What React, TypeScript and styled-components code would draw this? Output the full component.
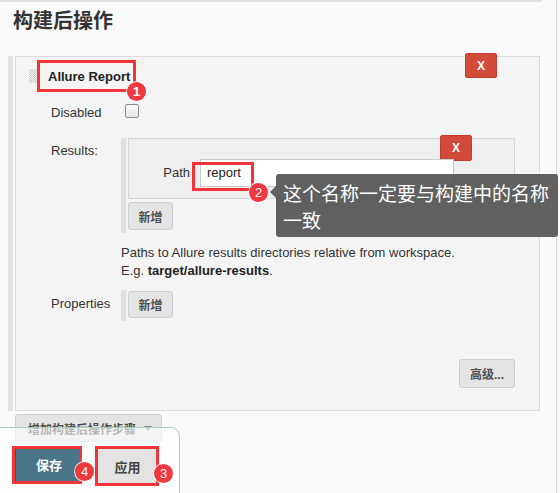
import React from "react";
import styled, { createGlobalStyle } from "styled-components";

const GlobalStyle = createGlobalStyle`
  html, body {
    margin: 0;
    padding: 0;
    background: #fafafa;
    overflow: hidden;
  }
  body {
    font-family: "Liberation Sans", Arial, "Noto Sans CJK SC", sans-serif;
    font-size: 13px;
    color: #333;
  }
`;

const Page = styled.div`
  position: relative;
  width: 557px;
  height: 493px;
  border-right: 1px solid #dcdcdc;
  box-sizing: border-box;
`;

const Main = styled.div`
  width: 542px;
  border-top: 2px solid #e0e0e0;
`;

const Title = styled.h1`
  margin: 0;
  padding: 3px 13px 5px;
  line-height: 30px;
  font-size: 20px;
  font-weight: bold;
  font-family: "Noto Sans CJK SC", sans-serif;
  color: #333;
`;

const Section = styled.div`
  margin: 16px 0 0 8px;
  padding-left: 2px;
  border-left: 5px solid #e3e3e3;
  width: 525px;
`;

const Panel = styled.div`
  position: relative;
  box-sizing: border-box;
  width: 525px;
  padding: 3px 24px 22px 13px;
  background: #f4f4f4;
  border: 1px solid #dcdcdc;
`;

const DeleteButton = styled.button<{ $h: number }>`
  position: absolute;
  top: -4px;
  right: 42px;
  width: 32px;
  height: ${(p) => p.$h}px;
  padding: 0;
  border: 1px solid #c23e2e;
  border-radius: 2px;
  background: #d24a3a;
  color: #fff;
  font-family: "Liberation Sans", Arial, sans-serif;
  font-size: 12px;
  font-weight: bold;
`;

const PanelHeader = styled.div`
  display: flex;
  align-items: center;
  height: 32px;
`;

const DragHandle = styled.span`
  width: 8px;
  height: 14px;
  background: repeating-conic-gradient(#c9c9c9 0 25%, transparent 0 50%) 0 0 / 2px 2px;
`;

const Heading = styled.div`
  position: relative;
  display: flex;
  align-items: center;
  box-sizing: border-box;
  height: 32px;
  padding: 0 6px 0 11px;
  font-weight: bold;
  color: #222;
`;

const Mark = styled.span<{ $l: number; $t: number; $w: number; $h: number }>`
  position: absolute;
  left: ${(p) => p.$l}px;
  top: ${(p) => p.$t}px;
  width: ${(p) => p.$w}px;
  height: ${(p) => p.$h}px;
  box-sizing: border-box;
  border: 3px solid #f1333a;
  pointer-events: none;
`;

const Badge = styled.span<{ $l: number; $t: number }>`
  position: absolute;
  left: ${(p) => p.$l}px;
  top: ${(p) => p.$t}px;
  width: 19px;
  height: 19px;
  border-radius: 50%;
  background: #ee393f;
  box-shadow: 0 0 0 1px rgba(255, 255, 255, 0.8);
  color: #fff;
  font-family: "Liberation Sans", Arial, sans-serif;
  font-size: 13px;
  line-height: 19px;
  text-align: center;
  z-index: 3;
`;

const FormRow = styled.div<{ $top: number }>`
  display: grid;
  grid-template-columns: 70px 1fr;
  margin: ${(p) => p.$top}px 0 0 22px;
`;

const Label = styled.div<{ $pad?: number }>`
  padding-top: ${(p) => p.$pad ?? 0}px;
  line-height: 18px;
  color: #333;
`;

const CheckCell = styled.div`
  display: flex;
  align-items: center;
  height: 22px;
  margin-top: -2px;
`;

const Checkbox = styled.span`
  width: 12px;
  height: 12px;
  margin-left: 4px;
  border: 1px solid #8d8d8d;
  border-radius: 2px;
  background: linear-gradient(#fdfdfd, #e4e4e4);
`;

const Repeated = styled.div<{ $btnTop: number }>`
  border-left: 5px solid #e1e1e1;
  padding: 0 0 3px 2px;
  & > button {
    margin-top: ${(p) => p.$btnTop}px;
  }
`;

const Chunk = styled.div`
  position: relative;
  box-sizing: border-box;
  width: 387px;
  padding: 20px 0 11px;
  border: 1px solid #d6d6d6;
  background: #efefef;
`;

const ChunkRow = styled.div`
  display: grid;
  grid-template-columns: 61px 254px;
  column-gap: 10px;
`;

const FieldLabel = styled.div`
  line-height: 28px;
  text-align: right;
  color: #333;
`;

const InputWrap = styled.div`
  position: relative;
`;

const TextInput = styled.div`
  box-sizing: border-box;
  height: 28px;
  padding: 0 6px;
  border: 1px solid #cacaca;
  background: #fff;
  line-height: 26px;
  color: #222;
`;

const GrayButton = styled.button<{ $w: number; $h: number }>`
  display: block;
  width: ${(p) => p.$w}px;
  height: ${(p) => p.$h}px;
  padding: 0;
  border: 1px solid #cfcfcf;
  border-radius: 3px;
  background: #e4e4e4;
  color: #4e4e4e;
  font-family: "Liberation Sans", Arial, "Noto Sans CJK SC", sans-serif;
  font-size: 12px;
  font-weight: bold;
`;

const Help = styled.div`
  line-height: 18px;
  color: #333;
  b {
    color: #222;
  }
`;

const AdvancedRow = styled.div`
  display: flex;
  justify-content: flex-end;
  margin-top: 38px;
`;

const AddStep = styled.button`
  display: flex;
  align-items: center;
  gap: 8px;
  box-sizing: border-box;
  height: 28px;
  margin: 3px 0 0 15px;
  padding: 0 9px 0 12px;
  border: 1px solid #d2d2d2;
  border-radius: 3px;
  background: #e4e4e4;
  color: #4e4e4e;
  font-family: "Liberation Sans", Arial, "Noto Sans CJK SC", sans-serif;
  font-size: 12px;
  font-weight: bold;
`;

const Caret = styled.span`
  width: 0;
  height: 0;
  border-left: 4px solid transparent;
  border-right: 4px solid transparent;
  border-top: 5px solid #888;
`;

const Tooltip = styled.div`
  position: absolute;
  left: 276px;
  top: 174px;
  box-sizing: border-box;
  width: 282px;
  height: 63px;
  padding: 5px 0 0 7px;
  border-radius: 3px;
  background: rgba(80, 80, 80, 0.9);
  color: #fff;
  font-family: "Noto Sans CJK SC", sans-serif;
  font-size: 19px;
  line-height: 27px;
  z-index: 2;
  &::before {
    content: "";
    position: absolute;
    left: -6px;
    top: 12px;
    border-top: 6px solid transparent;
    border-bottom: 6px solid transparent;
    border-right: 6px solid rgba(80, 80, 80, 0.9);
  }
`;

const Footer = styled.div`
  position: fixed;
  left: 0;
  top: 427px;
  box-sizing: border-box;
  width: 180px;
  height: 80px;
  display: flex;
  align-items: flex-start;
  gap: 13px;
  padding: 19px 0 0 15px;
  border: 1px solid #a9cfc2;
  border-left: 0;
  border-top-right-radius: 9px;
  background: rgba(255, 255, 255, 0.6);
  z-index: 2;
`;

const ButtonWrap = styled.div`
  position: relative;
`;

const SaveButton = styled.button`
  display: block;
  width: 67px;
  height: 37px;
  padding: 0;
  border: 0;
  border-left: 1px solid #2f5567;
  border-bottom: 2px solid #274a5a;
  background: #4a7588;
  color: #fff;
  font-family: "Noto Sans CJK SC", sans-serif;
  font-size: 13px;
  font-weight: bold;
`;

const ApplyButton = styled.button`
  display: block;
  width: 64px;
  height: 38px;
  padding: 0;
  border: 0;
  border-left: 1px solid #6ea6dc;
  background: #e3e3e3;
  color: #444;
  font-family: "Noto Sans CJK SC", sans-serif;
  font-size: 13px;
  font-weight: bold;
`;

export default function App() {
  return (
    <>
      <GlobalStyle />
      <Page>
        <Main>
          <Title>构建后操作</Title>
          <Section>
            <Panel>
              <DeleteButton $h={25}>X</DeleteButton>
              <PanelHeader>
                <DragHandle />
                <Heading>
                  Allure Report
                  <Mark $l={0} $t={0} $w={99} $h={32} />
                  <Badge $l={90} $t={22}>1</Badge>
                </Heading>
              </PanelHeader>

              <FormRow $top={10}>
                <Label $pad={2}>Disabled</Label>
                <CheckCell>
                  <Checkbox />
                </CheckCell>
              </FormRow>

              <FormRow $top={16}>
                <Label $pad={4}>Results:</Label>
                <Repeated $btnTop={3}>
                  <Chunk>
                    <DeleteButton $h={26}>X</DeleteButton>
                    <ChunkRow>
                      <FieldLabel>Path</FieldLabel>
                      <InputWrap>
                        <TextInput>report</TextInput>
                        <Mark $l={-8} $t={3} $w={62} $h={29} />
                        <Badge $l={49} $t={24}>2</Badge>
                      </InputWrap>
                    </ChunkRow>
                  </Chunk>
                  <GrayButton $w={45} $h={28}>新增</GrayButton>
                </Repeated>
              </FormRow>

              <FormRow $top={11}>
                <span />
                <Help>
                  Paths to Allure results directories relative from workspace.
                  <br />
                  E.g. <b>target/allure-results</b>.
                </Help>
              </FormRow>

              <FormRow $top={10}>
                <Label $pad={5}>Properties</Label>
                <Repeated $btnTop={1}>
                  <GrayButton $w={45} $h={27}>新增</GrayButton>
                </Repeated>
              </FormRow>

              <AdvancedRow>
                <GrayButton $w={56} $h={29}>高级...</GrayButton>
              </AdvancedRow>
            </Panel>
          </Section>

          <AddStep>
            增加构建后操作步骤
            <Caret />
          </AddStep>
        </Main>

        <Tooltip>
          这个名称一定要与构建中的名称
          <br />
          一致
        </Tooltip>

        <Footer>
          <ButtonWrap>
            <SaveButton>保存</SaveButton>
            <Mark $l={-3} $t={-1} $w={70} $h={38} />
            <Badge $l={60} $t={15}>4</Badge>
          </ButtonWrap>
          <ButtonWrap>
            <ApplyButton>应用</ApplyButton>
            <Mark $l={0} $t={-1} $w={64} $h={40} />
            <Badge $l={59} $t={17}>3</Badge>
          </ButtonWrap>
        </Footer>
      </Page>
    </>
  );
}
